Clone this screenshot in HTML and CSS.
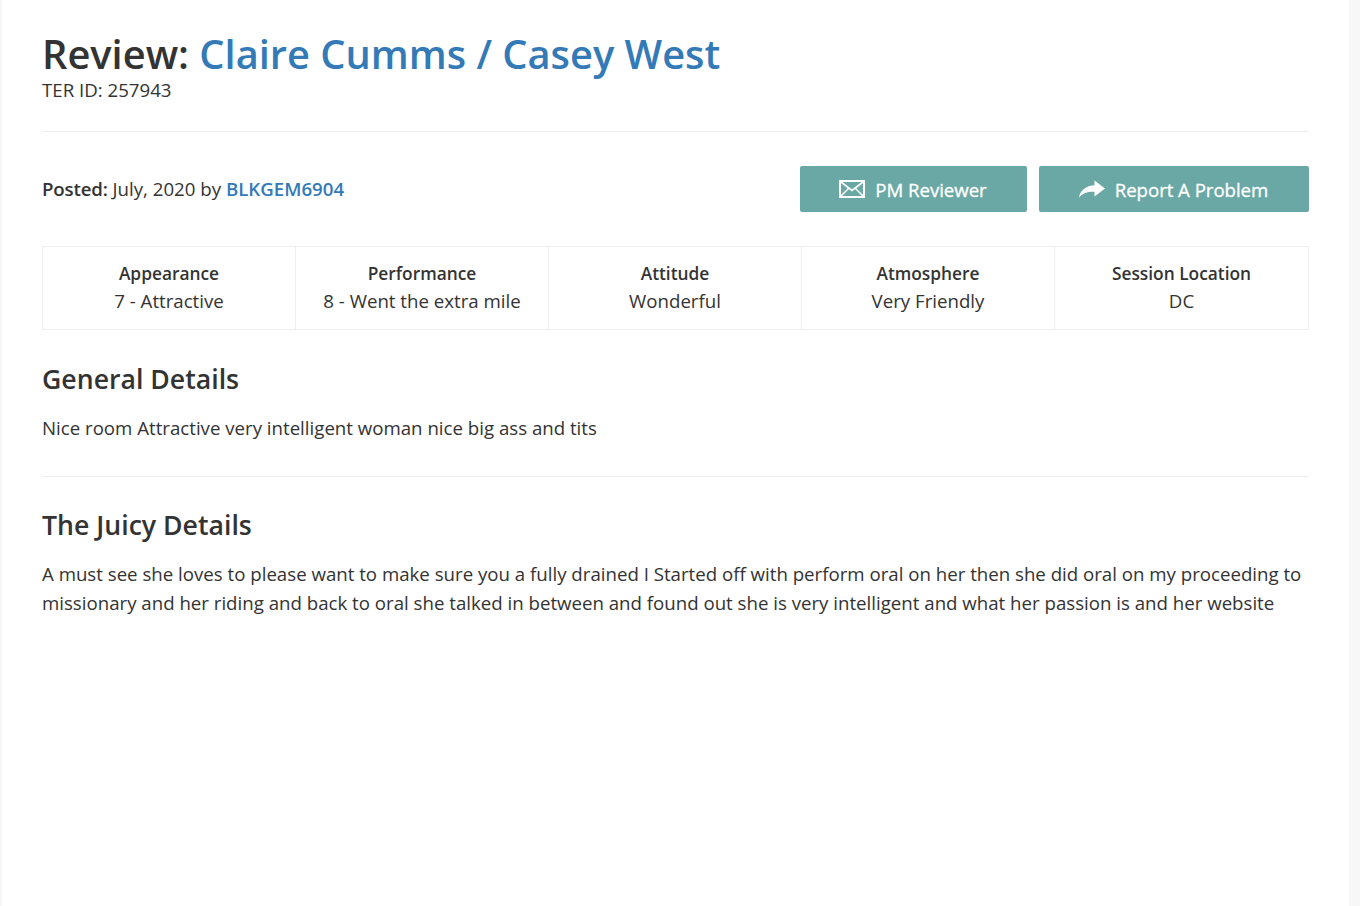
FILE: index.html
```html
<!DOCTYPE html>
<html lang="en">
<head>
<meta charset="utf-8">
<title>Review</title>
<link rel="stylesheet" href="styles.css">
</head>
<body>
<main class="card">
  <header class="head">
    <h1 class="title">Review: <a href="#">Claire Cumms / Casey West</a></h1>
    <div class="ter">TER ID: 257943</div>
  </header>
  <hr class="rule rule-head">
  <section class="meta">
    <div class="posted"><strong>Posted:</strong> July, 2020 by <a href="#">BLKGEM6904</a></div>
    <div class="actions">
      <a class="btn" href="#">
        <svg class="ico" viewBox="0 0 26 18" width="26" height="18" aria-hidden="true"><path d="M1 1h24v16H1z" fill="none" stroke="#fff" stroke-width="2"/><path d="M2 2l11 8.500L24 2M2 16l8-8M24 16l-8-8" fill="none" stroke="#fff" stroke-width="1.600"/></svg>
        <span>PM Reviewer</span></a>
      <a class="btn btn-wide" href="#">
        <svg class="ico" viewBox="0 0 26 18" width="26" height="18" aria-hidden="true"><path d="M15.500 0.500 26 8.500 15.500 16.500v-4.800C9.500 11.300 3.500 12.800 0 17.500 1 10.500 7 5.500 15.500 5.200z" fill="#fff"/></svg>
        <span>Report A Problem</span></a>
    </div>
  </section>
  <section class="stats">
    <div class="stat"><strong>Appearance</strong><span>7 - Attractive</span></div>
    <div class="stat"><strong>Performance</strong><span>8 - Went the extra mile</span></div>
    <div class="stat"><strong>Attitude</strong><span>Wonderful</span></div>
    <div class="stat"><strong>Atmosphere</strong><span>Very Friendly</span></div>
    <div class="stat"><strong>Session Location</strong><span>DC</span></div>
  </section>
  <h2 class="sub sub-general">General Details</h2>
  <p class="body-text">Nice room Attractive very intelligent woman nice big ass and tits</p>
  <hr class="rule rule-mid">
  <h2 class="sub">The Juicy Details</h2>
  <p class="body-text">A must see she loves to please want to make sure you a fully drained I Started off with perform oral on her then she did oral on my proceeding to missionary and her riding and back to oral she talked in between and found out she is very intelligent and what her passion is and her website</p>
</main>
</body>
</html>
```
FILE: styles.css
```css
* { box-sizing: border-box; }
html, body { margin: 0; height: 100%; }
body {
  background: #f7f7f7;
  font-family: "Open Sans", sans-serif;
  font-size: 18.67px;
  line-height: 29px;
  color: #333;
  overflow: hidden;
}
a { color: #337ab7; text-decoration: none; }
.card {
  background: #fff;
  margin-left: 2px;
  width: 1347px;
  height: 906px;
  padding: 27px 40px 0;
}
.title {
  margin: 0;
  font-size: 39.8px;
  line-height: 53px;
  font-weight: 600;
}
.ter { line-height: 20px; }
.rule { border: 0; border-top: 1px solid #eee; margin: 0; }
.rule-head { margin-top: 31px; width: 1266px; }
.meta {
  display: flex;
  justify-content: space-between;
  align-items: flex-start;
  margin-top: 34px;
  width: 1267px;
}
.posted { margin-top: 8px; }
.posted strong { font-weight: 600; letter-spacing: -0.15px; }
.posted a { font-weight: 600; }
.actions { display: flex; gap: 12px; }
.btn {
  display: flex;
  align-items: center;
  justify-content: center;
  gap: 10px;
  width: 227px;
  height: 46px;
  padding-right: 1px;
  border-radius: 2px;
  background: #6aa8a5;
  color: #fff;
  letter-spacing: -0.05px;
  -webkit-text-stroke: 0.3px #fff;
}
.btn-wide { width: 270px; }
.ico { flex: none; }
.stats {
  display: grid;
  grid-template-columns: repeat(5, 1fr);
  margin-top: 34px;
  width: 1267px;
  height: 84px;
  border: 1px solid #eee;
}
.stat {
  display: flex;
  flex-direction: column;
  align-items: center;
  padding-top: 12px;
  border-right: 1px solid #eee;
  line-height: 28px;
}
.stat:last-child { border-right: 0; }
.stat strong { font-size: 17.33px; font-weight: 600; }
.sub {
  margin: 0;
  font-size: 26.67px;
  line-height: 36px;
  font-weight: 600;
}
.sub-general { margin-top: 31px; }
.body-text { margin: 16px 0 0; width: 1267px; }
.rule-mid { margin-top: 34px; width: 1266px; margin-bottom: 30px; }
```
